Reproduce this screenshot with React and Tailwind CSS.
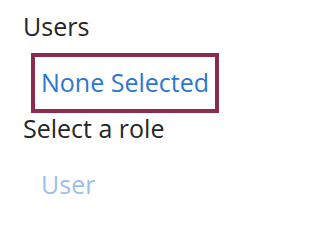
export default function App() {
  return (
    <div className="min-h-[206px] bg-white pl-[23px] pt-[11px] font-['Open_Sans',sans-serif] text-[25px] leading-[30px]">
      <p className="text-[#262626]">Users</p>
      <div className="mt-[12px] ml-[8px] box-border h-[60px] w-[188px] border-4 border-[#8a2b4f] pl-[6px] pt-[10px]">
        <p className="text-[#2b77d2]">None Selected</p>
      </div>
      <p className="text-[#262626]">Select a role</p>
      <p className="mt-[26px] ml-[18px] text-[#9dbfec]">User</p>
    </div>
  );
}
